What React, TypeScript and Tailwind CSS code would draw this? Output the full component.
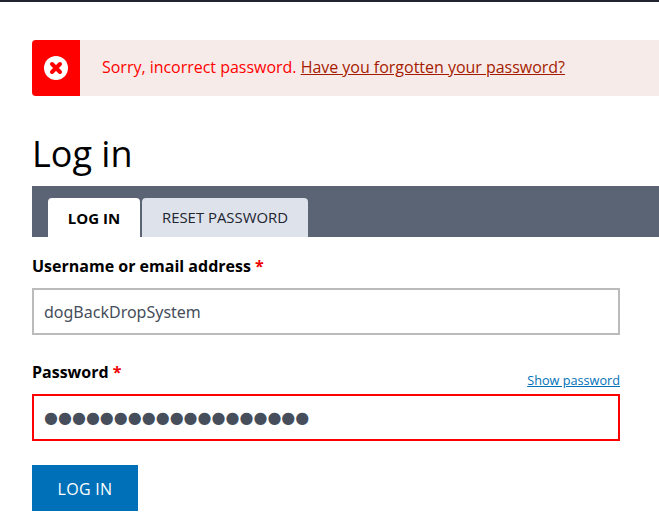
const font = "font-['Open_Sans',sans-serif]"
const inputFont = "font-['Noto_Sans',sans-serif]"

function ErrorIcon() {
  return (
    <svg width="24" height="24" viewBox="0 0 24 24" aria-hidden="true">
      <circle cx="12" cy="12" r="12" fill="#fff" />
      <path d="M8 8L16 16M16 8L8 16" stroke="#f00" strokeWidth="4" strokeLinecap="round" />
    </svg>
  )
}

function Required() {
  return <span className="text-[#e00]"> *</span>
}

export default function App() {
  return (
    <div className={`${font} h-[523px] w-[659px] overflow-hidden bg-white`}>
      <div className="h-[2px] bg-[#22242f]" />

      <div className="pl-8 pt-[38px]">
        <div className="flex h-14 items-stretch bg-[#f7ebe9]">
          <div className="flex w-12 shrink-0 items-center justify-center rounded-l-[4px] bg-[#f00]">
            <ErrorIcon />
          </div>
          <p className="ml-[22px] -mt-[2px] self-center text-base leading-6 tracking-[-0.02px] text-[#f00]">
            Sorry, incorrect password.{" "}
            <a href="#" className="text-[#a51b00] underline">
              Have you forgotten your password?
            </a>
          </p>
        </div>

        <h1 className="mt-[33px] text-[36px] font-normal leading-[50px] text-black">Log in</h1>

        <div className="mt-[7px] flex h-[51px] items-end gap-[2px] bg-[#5a6474] pl-4">
          <a href="#" className="flex h-[39px] w-[92px] items-center justify-center rounded-t-[4px] bg-white pt-px text-[15px] font-bold text-black">
            LOG IN
          </a>
          <a href="#" className="flex h-[39px] w-[166px] items-center justify-center rounded-t-[4px] bg-[#dee2ea] text-[14.9px] text-[#22242f]">
            RESET PASSWORD
          </a>
        </div>

        <form className="w-[588px]">
          <label className="mt-[17px] block text-base font-bold leading-6 text-black">
            Username or email address
            <Required />
          </label>
          <input
            readOnly
            value="dogBackDropSystem"
            className={`${inputFont} mt-[10px] block h-[47px] w-full border-2 border-[#bbb] bg-white px-[10px] text-base text-[#464e5b] outline-none`}
          />

          <div className="mt-[25px] flex items-end justify-between">
            <label className="mb-[4px] text-base font-bold leading-6 text-black">
              Password
              <Required />
            </label>
            <a href="#" className="text-[12.7px] leading-4 text-[#0071b8] underline">
              Show password
            </a>
          </div>
          <input
            readOnly
            value="●●●●●●●●●●●●●●●●●●●"
            className="mt-[6px] block h-[47px] w-full border-2 border-[#f00] bg-white px-[10px] font-['DejaVu_Sans',sans-serif] text-[16px] text-[#464e5b] outline-none"
          />

          <button type="button" className="mt-6 block h-[46px] w-[106px] bg-[#0071b8] pt-[2px] text-base tracking-[0.3px] text-white">
            LOG IN
          </button>
        </form>
      </div>
    </div>
  )
}
